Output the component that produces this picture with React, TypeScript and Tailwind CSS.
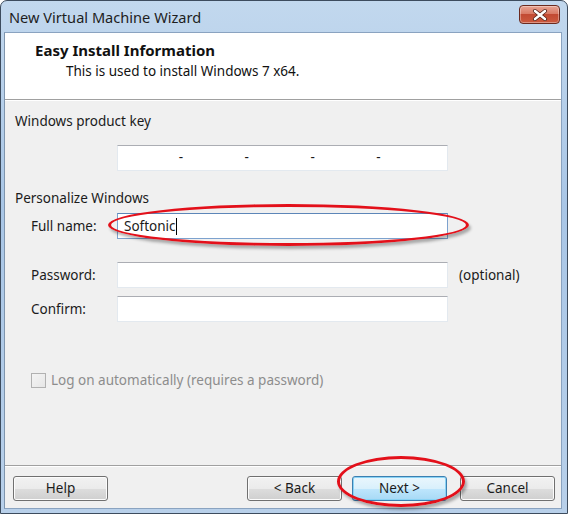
import React from "react";

const font = { fontFamily: '"Segoe UI", "Noto Sans", "Open Sans", sans-serif' };

function Btn({ label, primary }: { label: string; primary?: boolean }) {
  return (
    <div
      className={`w-[95px] h-[25px] rounded-[3px] border flex items-center justify-center text-[13.5px] text-[#1b1b1b] ${
        primary
          ? "border-[#3c7fb1] shadow-[inset_0_0_0_1px_#8ad3f5] bg-[linear-gradient(#eaf6fd_0%,#d9f0fc_50%,#bee6fd_51%,#a7d9f5_100%)]"
          : "border-[#707070] shadow-[inset_0_0_0_1px_#fcfcfc] bg-[linear-gradient(#f2f2f2_0%,#ebebeb_50%,#dddddd_51%,#cfcfcf_100%)]"
      }`}
    >
      {label}
    </div>
  );
}

function Field({ children, focus }: { children?: React.ReactNode; focus?: boolean }) {
  return (
    <div
      className={`w-[331px] h-[26px] bg-white border ${
        focus
          ? "border-[#7da2ce] border-t-[#5c86b8]"
          : "border-[#e3e9ef] border-t-[#abadb3]"
      } flex items-center`}
    >
      {children}
    </div>
  );
}

export default function App() {
  return (
    <div
      className="relative w-[568px] h-[514px] overflow-hidden bg-white"
      style={font}
    >
      <div className="w-[568px] h-[514px] flex flex-col rounded-t-[7px] border border-[#3d4c5e] bg-[linear-gradient(180deg,#c2d8ee_0%,#a9c6e6_40%,#b8d0ea_100%)] pl-[3px] pr-[5px] pb-[4px]">
        {/* title bar */}
        <div className="h-[31px] flex items-center justify-between shrink-0">
          <div className="pl-[5px] pt-[2px] text-[14.6px] text-[#1e1e1e]">
            New Virtual Machine Wizard
          </div>
          <div className="mr-[2px] mt-[-4px] w-[41px] h-[19px] rounded-[4px] border border-[#6b2a1f] bg-[linear-gradient(180deg,#e8a493_0%,#d97b66_45%,#c24a33_50%,#cc5a3f_100%)] flex items-center justify-center shadow-[inset_0_0_0_1px_rgba(255,255,255,0.35)]">
            <svg width="16" height="12" viewBox="0 0 16 12">
              <path
                d="M3 2 L13 10 M13 2 L3 10"
                stroke="#4a1a12"
                strokeWidth="4"
                strokeLinecap="round"
              />
              <path
                d="M3 2 L13 10 M13 2 L3 10"
                stroke="#ffffff"
                strokeWidth="2.6"
                strokeLinecap="round"
              />
            </svg>
          </div>
        </div>

        {/* client area */}
        <div className="flex-1 flex flex-col bg-[#f0f0f0] border border-[#8aa3c0] border-l-[#7f95ad]">
          {/* header */}
          <div className="h-[67px] shrink-0 bg-white border-b border-[#a0a0a0] pt-[7px]">
            <div className="pl-[30px] text-[15px] font-bold text-[#111] leading-[20px]">
              Easy Install Information
            </div>
            <div className="pl-[61px] pt-[1px] text-[13.5px] text-[#111] leading-[20px]">
              This is used to install Windows 7 x64.
            </div>
          </div>

          {/* body */}
          <div className="flex-1 flex flex-col text-[13.5px] text-[#1b1b1b] border-t border-white">
            <div className="pl-[10px] mt-[10px] leading-[20px]">Windows product key</div>
            <div className="pl-[112px] mt-[14px]">
              <div className="w-[331px] h-[26px] bg-white border border-[#e3e9ef] border-t-[#abadb3] grid grid-cols-5 items-center">
                <div />
                <div className="relative">
                  <span className="absolute left-[-5px] top-[-11px]">-</span>
                </div>
                <div className="relative">
                  <span className="absolute left-[-5px] top-[-11px]">-</span>
                </div>
                <div className="relative">
                  <span className="absolute left-[-5px] top-[-11px]">-</span>
                </div>
                <div className="relative">
                  <span className="absolute left-[-5px] top-[-11px]">-</span>
                </div>
              </div>
            </div>
            <div className="pl-[10px] mt-[17px] leading-[20px]">Personalize Windows</div>
            <div className="flex items-center mt-[5px]">
              <div className="w-[112px] pl-[26px]">Full name:</div>
              <Field focus>
                <span className="pl-[6px]">Softonic</span>
                <span className="w-[1px] h-[17px] bg-black" />
              </Field>
            </div>
            <div className="flex items-center mt-[23px]">
              <div className="w-[112px] pl-[26px]">Password:</div>
              <Field />
              <div className="pl-[11px]">(optional)</div>
            </div>
            <div className="flex items-center mt-[8px]">
              <div className="w-[112px] pl-[26px]">Confirm:</div>
              <Field />
            </div>
            <div className="flex items-center mt-[48px] pl-[26px] text-[#8d8d8d]">
              <div className="w-[15px] h-[15px] border border-[#b1b1b1] bg-[linear-gradient(135deg,#f4f4f4,#e6e6e6)]" />
              <span className="pl-[5px]">Log on automatically (requires a password)</span>
            </div>
            <div className="flex-1" />
            <div className="border-t border-[#a0a0a0] shadow-[0_1px_0_#ffffff]" />
            <div className="h-[42px] flex items-start pt-[10px] pl-[8px] pr-[6px]">
              <Btn label="Help" />
              <div className="flex-1" />
              <Btn label="< Back" />
              <div className="w-[10px]" />
              <Btn label="Next >" primary />
              <div className="w-[13px]" />
              <Btn label="Cancel" />
            </div>
          </div>
        </div>
      </div>

      {/* red annotation ellipses */}
      <div className="absolute left-[108px] top-[204px] w-[361px] h-[42px] rounded-[50%] border-[3px] border-[#e3101a] shadow-[2px_3px_3px_rgba(0,0,0,0.3)]" />
      <div className="absolute left-[337px] top-[456px] w-[128px] h-[51px] rounded-[50%] border-[3px] border-[#e3101a] shadow-[2px_3px_3px_rgba(0,0,0,0.3)]" />
    </div>
  );
}
